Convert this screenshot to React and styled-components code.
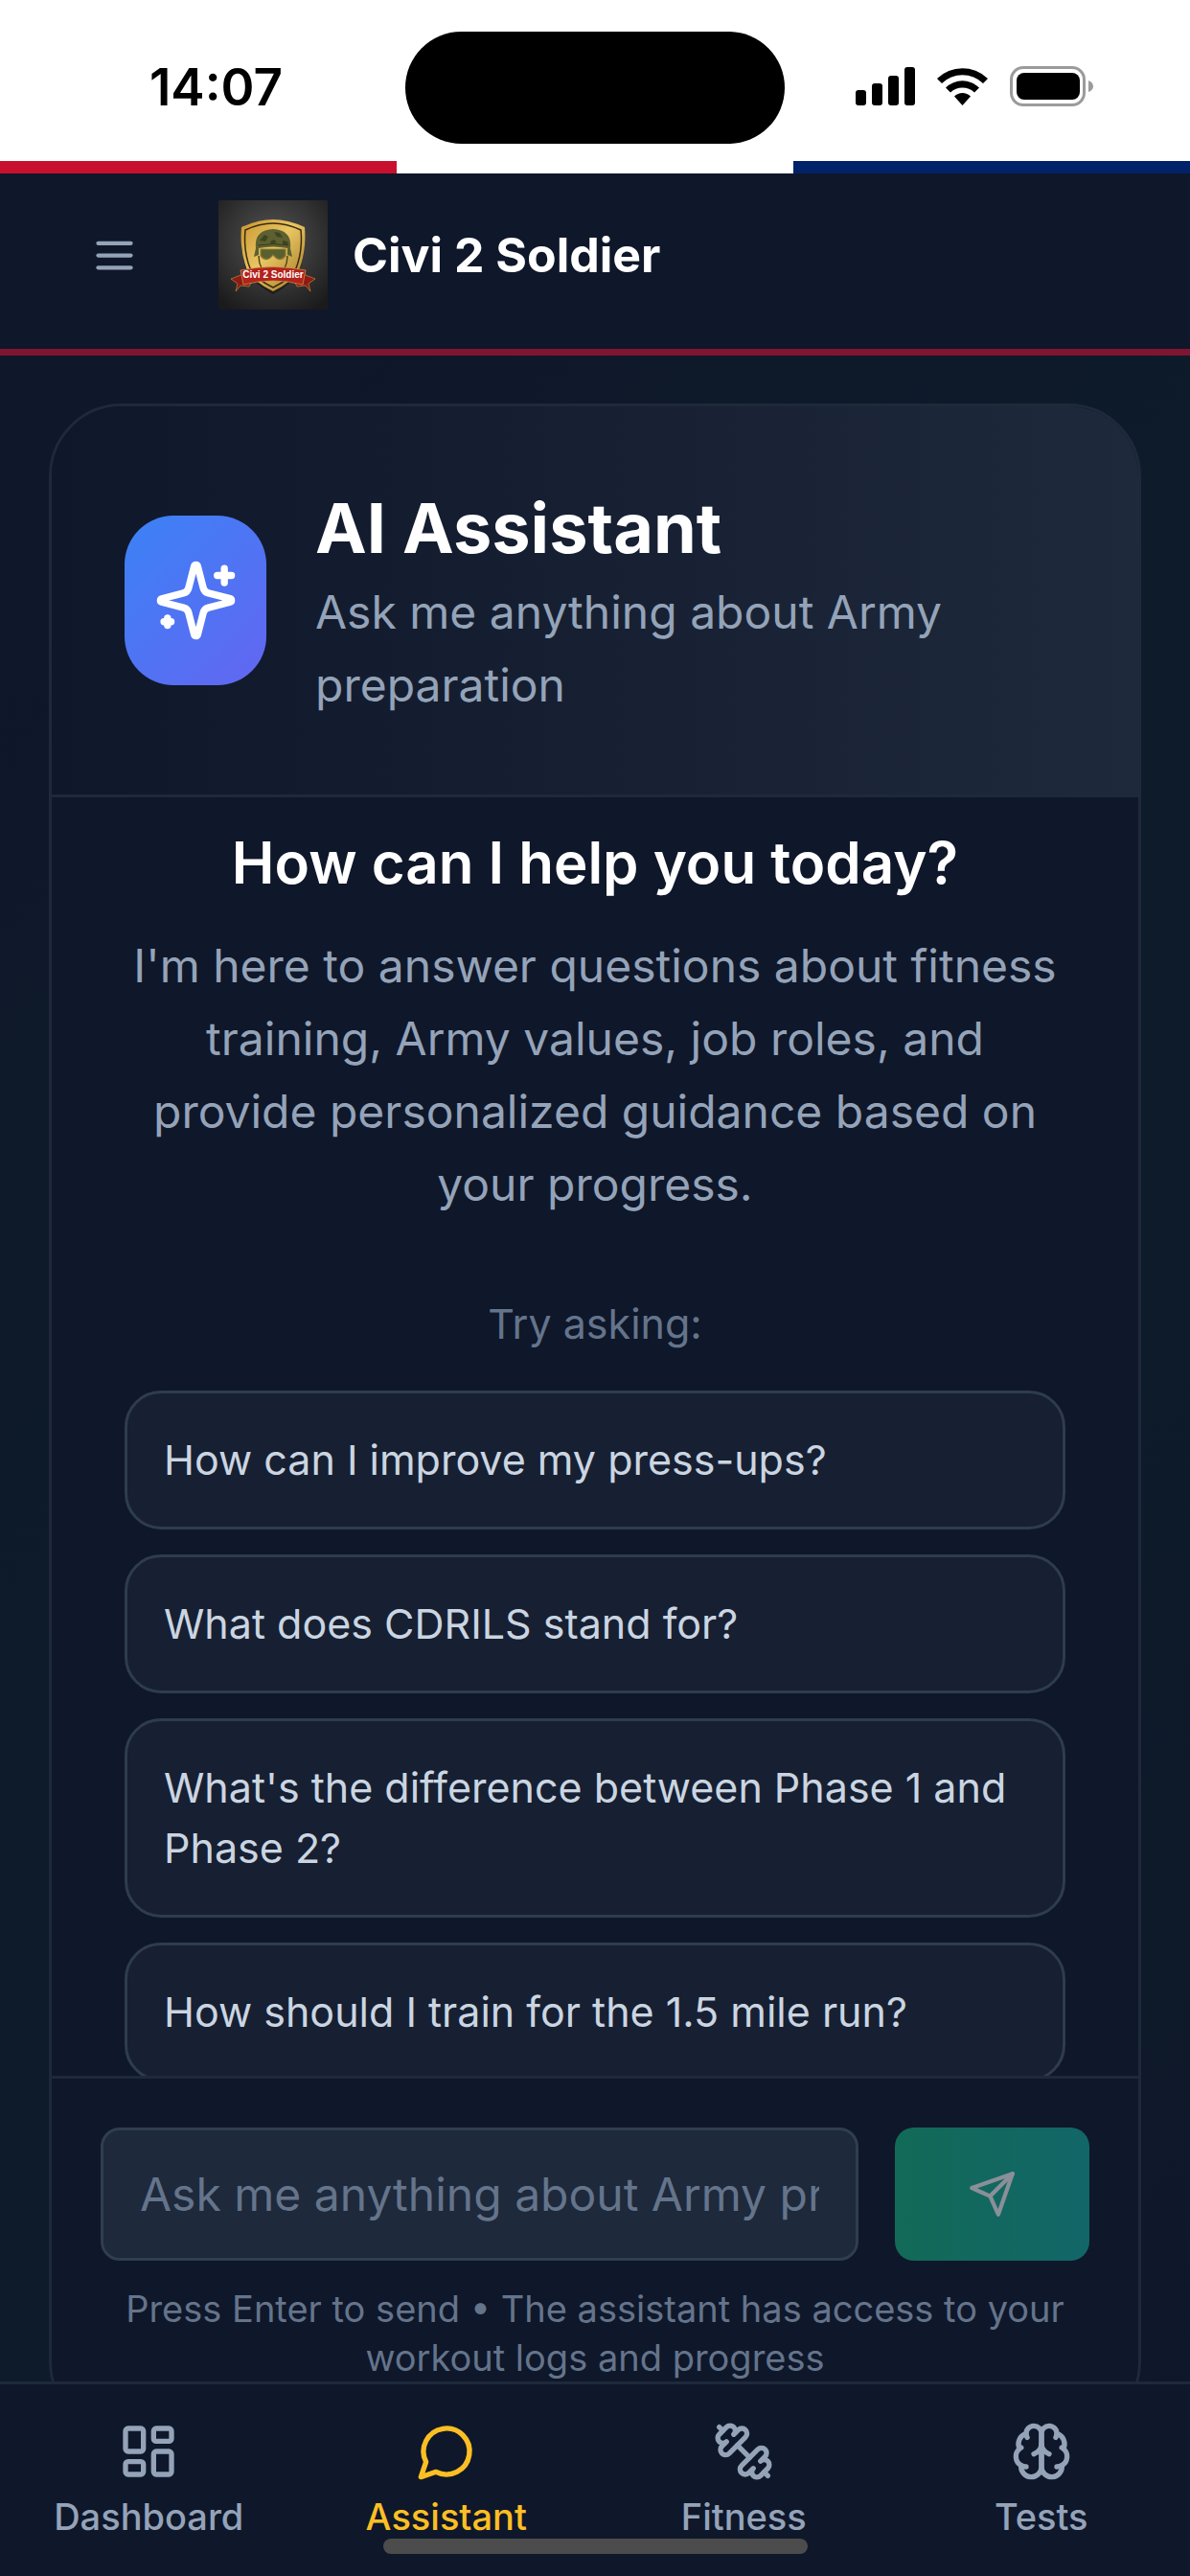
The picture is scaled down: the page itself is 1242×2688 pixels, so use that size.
import React from "react";
import styled, { createGlobalStyle } from "styled-components";

const GlobalStyle = createGlobalStyle`
* {
  box-sizing: border-box;
}
body {
  margin: 0;
  background: #0f172a;
  font-family: Inter, "Liberation Sans", sans-serif;
}
h1, h2, p {
  margin: 0;
}
button, input {
  font-family: inherit;
}
`;

const Screen = styled.div`
  height: 100vh;
  display: flex;
  flex-direction: column;
  overflow: hidden;
  background: linear-gradient(135deg, #0f172a 15%, #0d1b2a 45%, #0d1b2a 65%, #0f172a 100%);
`;

/* ---------- phone status bar ---------- */

const StatusBar = styled.div`
  flex: none;
  height: 168px;
  padding-top: 33px;
  display: grid;
  grid-template-columns: 1fr 396px 1fr;
  align-items: start;
  background: #fff;
  color: #000;
`;

const Clock = styled.div`
  padding: 26px 0 0 28px;
  text-align: center;
  font-size: 53px;
  line-height: 64px;
  font-weight: 600;
`;

const Island = styled.div`
  height: 117px;
  border-radius: 59px;
  background: #000;
`;

const StatusIcons = styled.div`
  display: flex;
  justify-content: center;
  padding: 34px 28px 0 0;
`;

const Stripes = styled.div`
  flex: none;
  height: 13px;
  display: grid;
  grid-template-columns: repeat(3, 1fr);
`;

const Stripe = styled.div`
  background: ${(props) => props.$color};
`;

/* ---------- app header ---------- */

const TopBar = styled.header`
  flex: none;
  display: flex;
  align-items: center;
  height: 190px;
  padding: 0 51px 13px 94px;
  background: #0f172a;
  border-bottom: 7px solid #7f1530;
`;

const MenuButton = styled.button`
  display: flex;
  padding: 0;
  border: none;
  background: none;
  color: #94a3b8;
`;

const Brand = styled.a`
  display: flex;
  align-items: center;
  gap: 26px;
  margin-left: 83px;
  color: #fff;
  font-size: 50px;
  line-height: 76px;
  font-weight: 700;
  text-decoration: none;
`;

/* ---------- chat card ---------- */

const Main = styled.main`
  flex: 1;
  min-height: 0;
  padding: 50px 51px 0;
`;

const Card = styled.section`
  height: calc(100vh - 569px);
  display: flex;
  flex-direction: column;
  overflow: hidden;
  border: 3px solid #1e293b;
  border-radius: 76px;
  background: #0f172a;
`;

const CardHeader = styled.div`
  flex: none;
  display: flex;
  align-items: center;
  gap: 51px;
  padding: 76px;
  border-bottom: 3px solid #1e293b;
  background: linear-gradient(90deg, #0f172a, #1e293b);
`;

const IconTile = styled.div`
  flex: none;
  display: flex;
  align-items: center;
  justify-content: center;
  width: 148px;
  height: 177px;
  border-radius: 51px;
  background: linear-gradient(135deg, #3b82f6, #6366f1);
  color: #fff;
`;

const Title = styled.h1`
  color: #fff;
  font-size: 72px;
  line-height: 101px;
  font-weight: 700;
`;

const Lead = styled.p`
  color: #94a3b8;
  font-size: 48px;
  line-height: 76px;
`;

const Messages = styled.div`
  flex: 1;
  min-height: 0;
  overflow: hidden;
  padding: 24px 76px 0;
  text-align: center;
`;

const Question = styled.h2`
  margin-bottom: 26px;
  color: #fff;
  font-size: 60px;
  line-height: 88px;
  font-weight: 600;
`;

const Hint = styled.p`
  margin: 76px 0 38px;
  color: #64748b;
  font-size: 43px;
  line-height: 63px;
`;

const Suggestions = styled.div`
  display: flex;
  flex-direction: column;
  gap: 26px;
`;

const Suggestion = styled.button`
  padding: 38px;
  border: 3px solid #2e3d4e;
  border-radius: 38px;
  background: #162032;
  color: #cbd5e1;
  font-size: 43px;
  line-height: 63px;
  text-align: left;
`;

const Composer = styled.form`
  flex: none;
  padding: 51px;
  border-top: 3px solid #1e293b;
`;

const InputRow = styled.div`
  display: flex;
  gap: 38px;
`;

const MessageInput = styled.input`
  flex: 1;
  min-width: 0;
  height: 139px;
  padding: 0 38px;
  border: 3px solid #2f3e50;
  border-radius: 20px;
  background: #1e293b;
  color: #fff;
  font-size: 48px;
  &::placeholder {
    color: #64748b;
    opacity: 1;
  }
`;

const SendButton = styled.button`
  display: flex;
  align-items: center;
  justify-content: center;
  width: 203px;
  padding: 0;
  border: none;
  border-radius: 20px;
  background: linear-gradient(90deg, #126a57, #126668);
  color: #8a8f99;
`;

const Note = styled.p`
  margin-top: 25px;
  color: #64748b;
  font-size: 38px;
  line-height: 51px;
  text-align: center;
`;

/* ---------- bottom tabs ---------- */

const TabBar = styled.nav`
  position: fixed;
  left: 0;
  right: 0;
  bottom: 0;
  display: grid;
  grid-template-columns: repeat(4, 1fr);
  height: 203px;
  padding-top: 38px;
  border-top: 3px solid #1e293b;
  background: #0f172a;
`;

const Tab = styled.a`
  display: flex;
  flex-direction: column;
  align-items: center;
  gap: 11px;
  color: ${(props) => (props.$active ? "#fbbf24" : "#94a3b8")};
  font-size: 38px;
  line-height: 51px;
  font-weight: 500;
  text-decoration: none;
`;

const HomeIndicator = styled.div`
  position: fixed;
  left: 50%;
  bottom: 23px;
  width: 443px;
  height: 16px;
  margin-left: -221px;
  border-radius: 8px;
  background: #4c4c4c;
`;

/* ---------- icons ---------- */

const icons = {
  menu: ["M4 12h16", "M4 6h16", "M4 18h16"],
  sparkles: [
    "M9.937 15.5A2 2 0 0 0 8.5 14.063l-6.135-1.582a.5.5 0 0 1 0-.962L8.5 9.936A2 2 0 0 0 9.937 8.5l1.582-6.135a.5.5 0 0 1 .963 0L14.063 8.5A2 2 0 0 0 15.5 9.937l6.135 1.581a.5.5 0 0 1 0 .964L15.5 14.063a2 2 0 0 0-1.437 1.437l-1.582 6.135a.5.5 0 0 1-.963 0z",
    "M20 3v4",
    "M22 5h-4",
    "M4 17v2",
    "M5 18H3",
  ],
  send: ["m22 2-7 20-4-9-9-4Z", "M22 2 11 13"],
  dashboard: [
    "M4 3h5a1 1 0 0 1 1 1v7a1 1 0 0 1-1 1H4a1 1 0 0 1-1-1V4a1 1 0 0 1 1-1z",
    "M15 3h5a1 1 0 0 1 1 1v3a1 1 0 0 1-1 1h-5a1 1 0 0 1-1-1V4a1 1 0 0 1 1-1z",
    "M15 12h5a1 1 0 0 1 1 1v7a1 1 0 0 1-1 1h-5a1 1 0 0 1-1-1v-7a1 1 0 0 1 1-1z",
    "M4 16h5a1 1 0 0 1 1 1v3a1 1 0 0 1-1 1H4a1 1 0 0 1-1-1v-3a1 1 0 0 1 1-1z",
  ],
  message: ["M7.9 20A9 9 0 1 0 4 16.1L2 22Z"],
  dumbbell: [
    "M14.4 14.4 9.6 9.6",
    "M18.657 21.485a2 2 0 1 1-2.829-2.828l-1.767 1.768a2 2 0 1 1-2.829-2.829l6.364-6.364a2 2 0 1 1 2.829 2.829l-1.768 1.767a2 2 0 1 1 2.828 2.829z",
    "m21.5 21.5-1.4-1.4",
    "M3.9 3.9 2.5 2.5",
    "M6.404 12.768a2 2 0 1 1-2.829-2.829l1.768-1.767a2 2 0 1 1-2.828-2.829l2.828-2.828a2 2 0 1 1 2.829 2.828l1.767-1.768a2 2 0 1 1 2.829 2.829z",
  ],
  brain: [
    "M12 5a3 3 0 1 0-5.997.125 4 4 0 0 0-2.526 5.77 4 4 0 0 0 .556 6.588A4 4 0 1 0 12 18Z",
    "M12 5a3 3 0 1 1 5.997.125 4 4 0 0 1 2.526 5.77 4 4 0 0 1-.556 6.588A4 4 0 1 1 12 18Z",
    "M15 13a4.5 4.5 0 0 1-3-4 4.5 4.5 0 0 1-3 4",
    "M17.599 6.5a3 3 0 0 0 .399-1.375",
    "M6.003 5.125A3 3 0 0 0 6.401 6.5",
    "M3.477 10.896a4 4 0 0 1 .585-.396",
    "M19.938 10.5a4 4 0 0 1 .585.396",
    "M6 18a4 4 0 0 1-1.967-.516",
    "M19.967 17.484A4 4 0 0 1 18 18",
  ],
};

const Icon = ({ name, size }) => (
  <svg
    width={size}
    height={size}
    viewBox="0 0 24 24"
    fill="none"
    stroke="currentColor"
    strokeWidth="2"
    strokeLinecap="round"
    strokeLinejoin="round"
    aria-hidden="true"
  >
    {icons[name].map((d) => (
      <path key={d} d={d} />
    ))}
  </svg>
);

const PhoneIcons = () => (
  <svg width="250" height="46" viewBox="0 0 250 46" aria-hidden="true">
    <rect x="1" y="27" width="11" height="16" rx="3" />
    <rect x="18" y="20" width="11" height="23" rx="3" />
    <rect x="35" y="12" width="11" height="31" rx="3" />
    <rect x="52" y="3" width="11" height="40" rx="3" />
    <path d="M86 15A38 38 0 0 1 139 15L134 20A31 31 0 0 0 91 20Z" />
    <path d="M95 24.500A25 25 0 0 1 130 24.500L125 29.500A18 18 0 0 0 100 29.500Z" />
    <path d="M104 33.500A12 12 0 0 1 121 33.500L112.500 43Z" />
    <rect x="163.500" y="3.500" width="76" height="39" rx="12.500" fill="none" stroke="#9b9b9b" strokeWidth="3" />
    <rect x="169" y="9" width="66" height="28" rx="8" />
    <path d="M244 17q5 2 5 6t-5 6z" fill="#9b9b9b" />
  </svg>
);

const Logo = () => (
  <svg width="114" height="114" viewBox="0 0 114 114" role="img" aria-label="Civi 2 Soldier badge">
    <defs>
      <radialGradient id="plate" cx="50%" cy="38%" r="72%">
        <stop offset="0" stopColor="#555" />
        <stop offset="1" stopColor="#1b1b1b" />
      </radialGradient>
      <linearGradient id="gold" x1="0" y1="0" x2="1" y2="1">
        <stop offset="0" stopColor="#c9962f" />
        <stop offset="0.45" stopColor="#e9c664" />
        <stop offset="1" stopColor="#9c7420" />
      </linearGradient>
    </defs>
    <rect width="114" height="114" fill="url(#plate)" />
    <path d="M25 30Q43 28 57 21Q71 28 89 30Q92 55 84 75Q76 88 57 98Q38 88 30 75Q22 55 25 30Z" fill="#15130f" opacity="0.6" />
    <path d="M24 28Q42 20 57 20Q72 20 90 28Q92 53 84 73Q76 86 57 95Q38 86 30 73Q22 53 24 28Z" fill="url(#gold)" />
    <path d="M28 31Q43 24 57 24Q71 24 86 31Q88 53 81 71Q74 83 57 91Q40 83 33 71Q26 53 28 31Z" fill="none" stroke="#3c2b10" strokeWidth="1.500" />
    {/* helmet, goggles and straps */}
    <path d="M39 50Q37 31 57 30Q77 31 75 50L77 59L72 57V50Q57 47 42 50V57L37 59Z" fill="#5d6030" />
    <path d="M43 42l5-6 4 2-3 5zM58 33l6 1 3 5-6-1zM67 42l5 1 1 4-6-1zM54 43l4-2 3 3-6 2z" fill="#3d441f" />
    <path d="M41 47Q57 44 73 47" fill="none" stroke="#3c3c1a" strokeWidth="1" />
    <path d="M44 51H70V58Q65 64 60 60L57 57L54 60Q49 64 44 58Z" fill="#59602f" stroke="#8d7a34" strokeWidth="1.200" />
    <path d="M42 58Q42 65 45 71M72 58Q72 65 69 71" fill="none" stroke="#54461a" strokeWidth="1.500" />
    <path d="M13 82L26 77L35 84L32 90L23 89L18 95L20 87Z" fill="#8f1a16" stroke="#b8893a" strokeWidth="0.700" />
    <path d="M101 82L88 77L79 84L82 90L91 89L96 95L94 87Z" fill="#8f1a16" stroke="#b8893a" strokeWidth="0.700" />
    <path d="M23 73Q57 66 91 73L88 88Q57 80 26 88Z" fill="#b3221c" stroke="#cf9a45" strokeWidth="0.700" />
    <text x="57" y="81" textAnchor="middle" fontFamily="Liberation Sans Narrow, Liberation Sans, sans-serif" fontSize="10" fontWeight="700" fill="#fff">
      Civi 2 Soldier
    </text>
  </svg>
);

const suggestions = [
  "How can I improve my press-ups?",
  "What does CDRILS stand for?",
  "What's the difference between Phase 1 and Phase 2?",
  "How should I train for the 1.5 mile run?",
];

const tabs = [
  { label: "Dashboard", icon: "dashboard" },
  { label: "Assistant", icon: "message", active: true },
  { label: "Fitness", icon: "dumbbell" },
  { label: "Tests", icon: "brain" },
];

const App = () => {
  return (
    <Screen>
      <GlobalStyle />
      <StatusBar>
        <Clock>14:07</Clock>
        <Island />
        <StatusIcons>
          <PhoneIcons />
        </StatusIcons>
      </StatusBar>
      <Stripes>
        <Stripe $color="#c8102e" />
        <Stripe $color="#ffffff" />
        <Stripe $color="#012169" />
      </Stripes>

      <TopBar>
        <MenuButton type="button" aria-label="Open menu">
          <Icon name="menu" size={51} />
        </MenuButton>
        <Brand href="#home">
          <Logo />
          Civi 2 Soldier
        </Brand>
      </TopBar>

      <Main>
        <Card>
          <CardHeader>
            <IconTile>
              <Icon name="sparkles" size={89} />
            </IconTile>
            <div>
              <Title>AI Assistant</Title>
              <Lead>Ask me anything about Army preparation</Lead>
            </div>
          </CardHeader>

          <Messages>
            <Question>How can I help you today?</Question>
            <Lead>
              I'm here to answer questions about fitness training, Army values, job roles, and
              provide personalized guidance based on your progress.
            </Lead>
            <Hint>Try asking:</Hint>
            <Suggestions>
              {suggestions.map((text) => (
                <Suggestion key={text} type="button">
                  {text}
                </Suggestion>
              ))}
            </Suggestions>
          </Messages>

          <Composer onSubmit={(e) => e.preventDefault()}>
            <InputRow>
              <MessageInput
                type="text"
                aria-label="Message"
                placeholder="Ask me anything about Army preparation..."
              />
              <SendButton type="submit" aria-label="Send message">
                <Icon name="send" size={51} />
              </SendButton>
            </InputRow>
            <Note>Press Enter to send • The assistant has access to your workout logs and progress</Note>
          </Composer>
        </Card>
      </Main>

      <TabBar>
        {tabs.map((tab) => (
          <Tab key={tab.label} href={`#${tab.label.toLowerCase()}`} $active={tab.active}>
            <Icon name={tab.icon} size={64} />
            {tab.label}
          </Tab>
        ))}
      </TabBar>
      <HomeIndicator />
    </Screen>
  );
};

export default App;
